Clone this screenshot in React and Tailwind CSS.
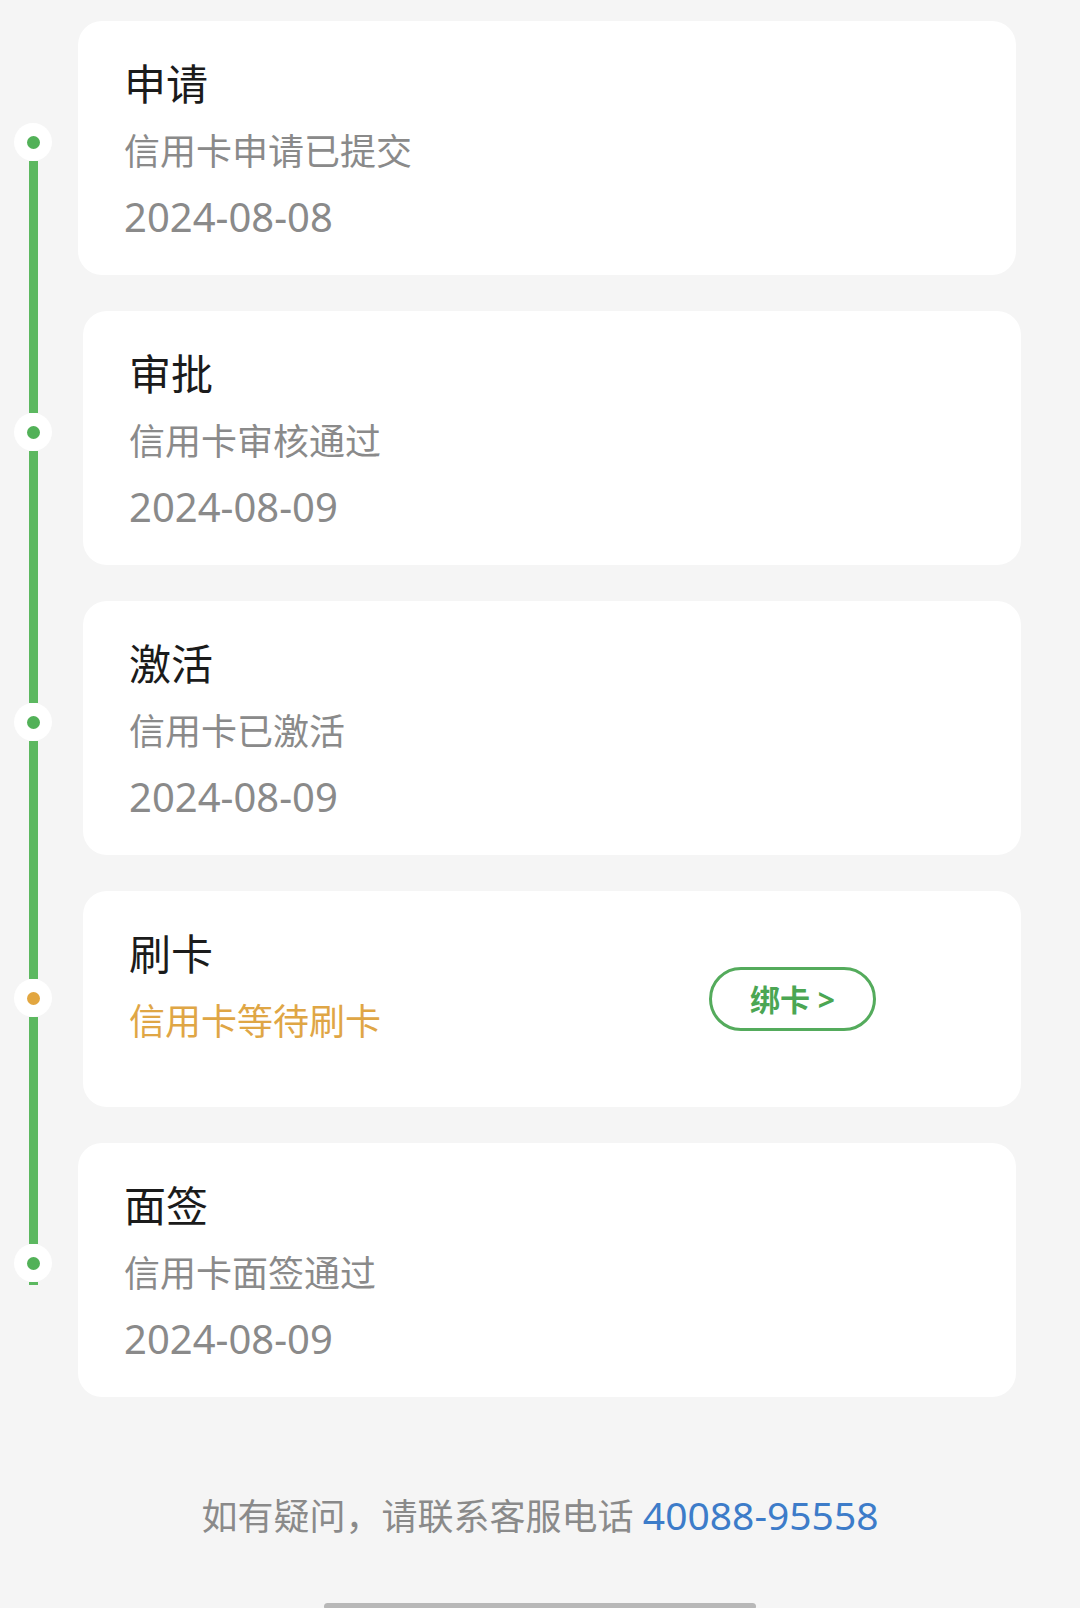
import React from 'react';

const steps = [
    { title: '申请', desc: '信用卡申请已提交', date: '2024-08-08', top: 'h-[120px]', first: true },
    { title: '审批', desc: '信用卡审核通过', date: '2024-08-09', top: 'h-[120px]', shift: true },
    { title: '激活', desc: '信用卡已激活', date: '2024-08-09', top: 'h-[120px]', shift: true },
    { title: '刷卡', desc: '信用卡等待刷卡', top: 'h-[106px]', shift: true, pending: true },
    { title: '面签', desc: '信用卡面签通过', date: '2024-08-09', top: 'h-[119px]', last: true },
];

const Rail = ({ step }) => (
    <div className="w-[66px] shrink-0 flex flex-col items-center">
        <div className={`w-[9px] ${step.top} ${step.first ? 'bg-transparent' : 'bg-[#5cb860]'}`} />
        <div className="w-[38px] h-[38px] rounded-full bg-white flex items-center justify-center">
            <div className={`w-[13px] h-[13px] rounded-full ${step.pending ? 'bg-[#e2a640]' : 'bg-[#52b158]'}`} />
        </div>
        <div className={`w-[9px] bg-[#5cb860] ${step.last ? 'h-[3px]' : 'flex-1'}`} />
    </div>
);

const StepCard = ({ step }) => (
    <div
        className={`w-[938px] bg-white rounded-[24px] pl-[46px] pt-[31px] flex items-center justify-between ${
            step.shift ? 'ml-[17px]' : 'ml-[12px]'
        } ${step.pending ? 'pb-[49px] pr-[145px]' : 'pb-[29px]'}`}
    >
        <div className="flex flex-col">
            <div className="text-[42px] leading-[64px] text-[#1b1b1b]">{step.title}</div>
            <div className={`text-[36px] leading-[72px] ${step.pending ? 'text-[#dfa645]' : 'text-[#8a8a8a]'}`}>
                {step.desc}
            </div>
            {step.date && <div className="text-[40px] leading-[58px] text-[#8a8a8a]">{step.date}</div>}
        </div>
        {step.pending && (
            <button className="mt-[18px] w-[167px] h-[64px] rounded-full border-[3px] border-[#54ab5c] text-[#4ba653] text-[30px] font-bold flex items-center justify-center">
                绑卡 &gt;
            </button>
        )}
    </div>
);

export default function App() {
    return (
        <div className="min-h-screen bg-[#f5f5f5] pt-[3px] font-['Noto_Sans','Noto_Sans_CJK_SC',sans-serif]">
            {steps.map((step) => (
                <div key={step.title} className="flex">
                    <Rail step={step} />
                    <div className="py-[18px]">
                        <StepCard step={step} />
                    </div>
                </div>
            ))}

            <div className="mt-[75px] text-center text-[36px] leading-[50px] text-[#8a8a8a]">
                如有疑问，请联系客服电话 <span className="text-[39px] text-[#3d7cc9]">40088-95558</span>
            </div>

            <div className="mt-[61px] flex justify-center">
                <div className="w-[432px] h-[7px] rounded-full bg-[#b8b8b8]" />
            </div>
        </div>
    );
}
